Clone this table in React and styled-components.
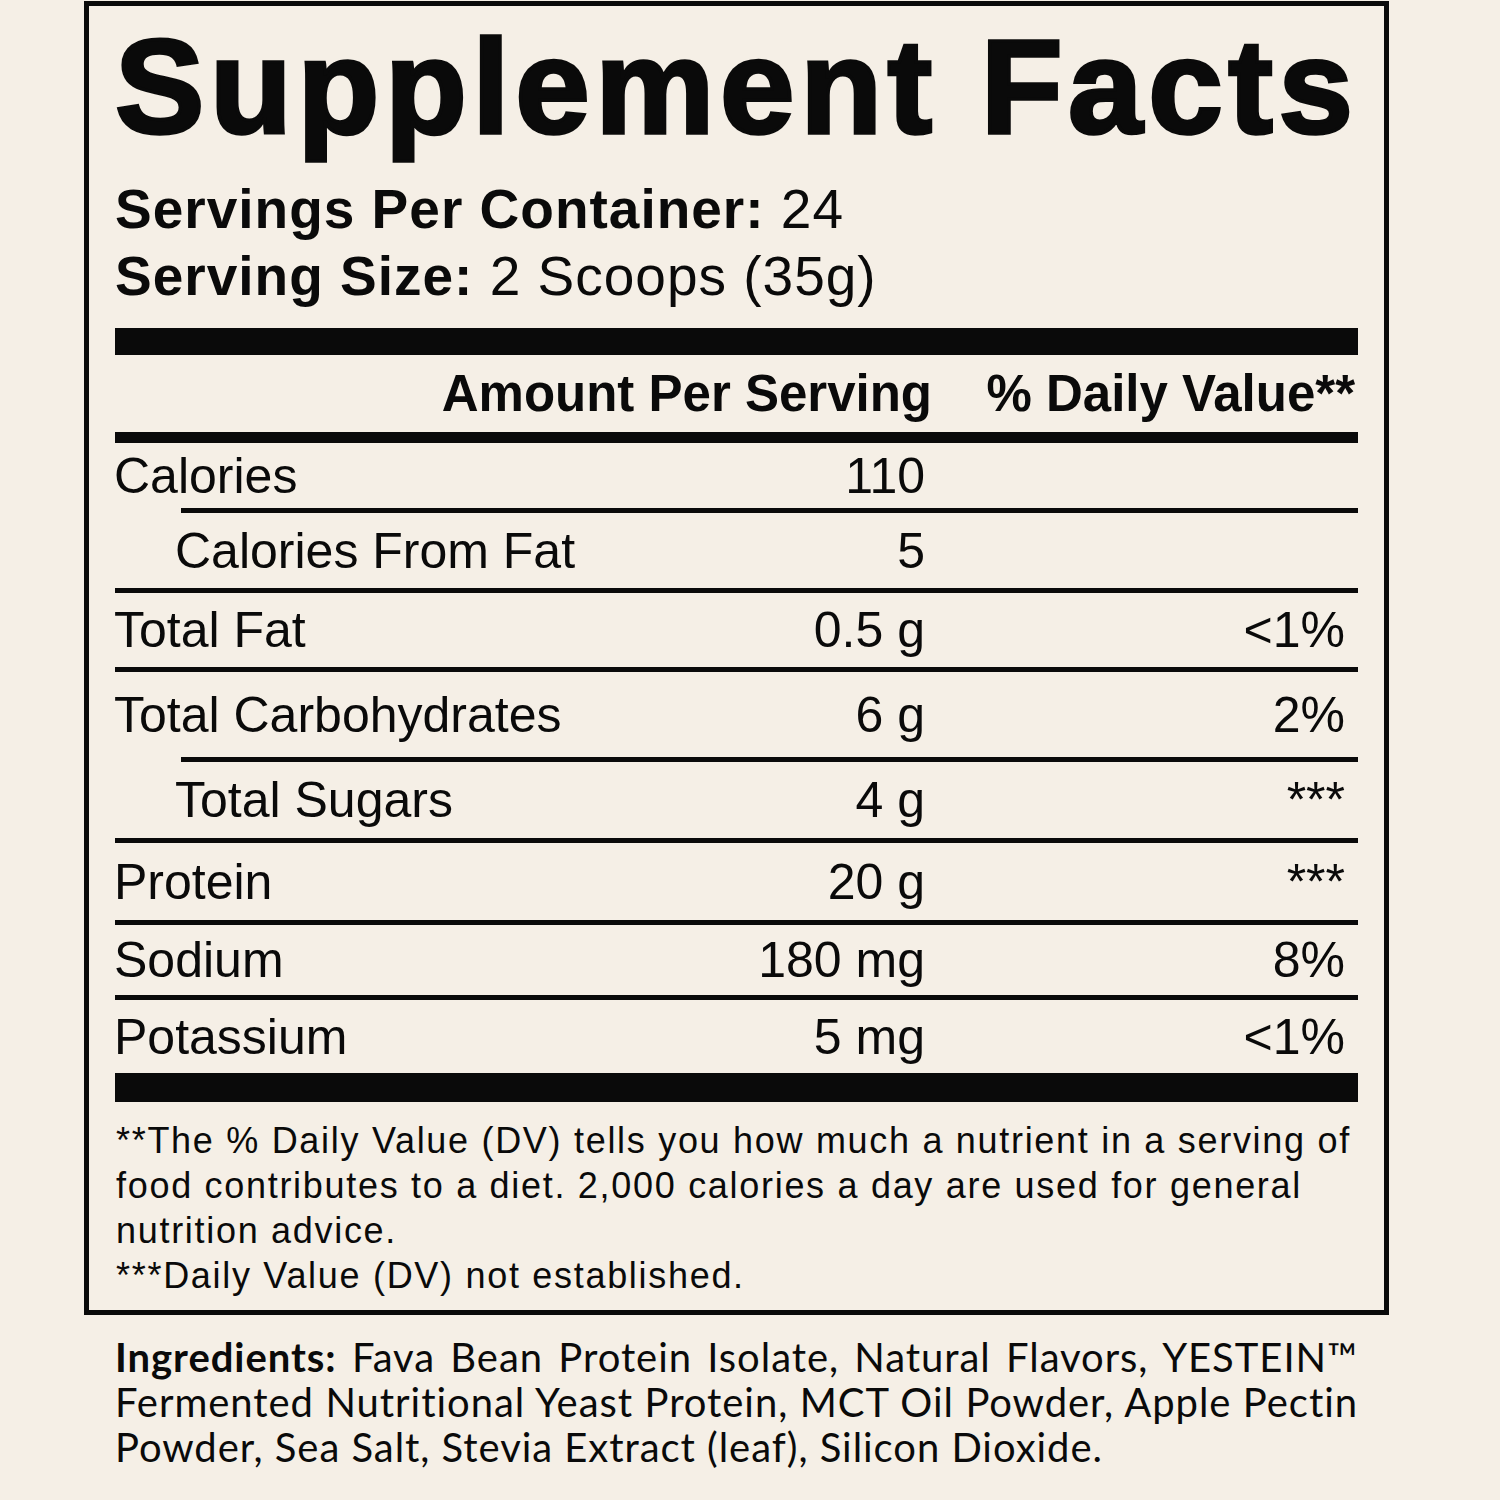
import React from 'react';
import styled, { createGlobalStyle } from 'styled-components';

const GlobalStyle = createGlobalStyle`
  html, body {
    margin: 0;
    padding: 0;
    background: #f5efe6;
  }
  body {
    font-family: "Liberation Sans", Arial, sans-serif;
    color: #0a0a0a;
  }
`;

const Page = styled.div`
  width: 1500px;
  min-height: 1500px;
  box-sizing: border-box;
  padding: 1px 0 0 84px;
`;

const Panel = styled.div`
  width: 1305px;
  box-sizing: border-box;
  border: 5px solid #0a0a0a;
  padding: 14px 26px 12px;
`;

const Title = styled.h1`
  margin: 0 0 22px;
  font-size: 134px;
  line-height: 1;
  font-weight: 700;
  letter-spacing: 5.6px;
  -webkit-text-stroke: 3.5px #0a0a0a;
  white-space: nowrap;
`;

const ServingLine = styled.div`
  font-size: 55px;
  line-height: 67px;
  letter-spacing: 1px;
  white-space: nowrap;

  strong {
    font-weight: 700;
  }
`;

const Bar = styled.div`
  height: ${p => p.$size}px;
  background: #0a0a0a;
  margin-top: ${p => p.$gap || 0}px;
`;

const HeaderRow = styled.div`
  display: grid;
  grid-template-columns: 1fr 300px 433px;
  align-items: center;
  height: 77px;
  font-size: 51px;
  line-height: 1;
  font-weight: 700;
  white-space: nowrap;
`;

const AmountHead = styled.div`
  grid-column: 1 / 3;
  text-align: right;
  margin-right: -7px;
`;

const DailyHead = styled.div`
  text-align: right;
  padding-right: 3px;
`;

const Row = styled.div`
  display: grid;
  grid-template-columns: 1fr 300px 433px;
  align-items: center;
  height: ${p => p.$h}px;
  font-size: 50px;
  line-height: 1;
  white-space: nowrap;
`;

const Name = styled.div`
  padding-left: ${p => (p.$sub ? 61 : 0)}px;
  margin-left: -1px;
`;

const Amount = styled.div`
  text-align: right;
`;

const Daily = styled.div`
  text-align: right;
  padding-right: 13px;
`;

const Divider = styled.div`
  height: 5px;
  background: #0a0a0a;
  margin-left: ${p => (p.$inset ? 66 : 0)}px;
`;

const Footnote = styled.div`
  margin-top: 16px;
  margin-left: 1px;
  font-size: 36px;
  line-height: 45px;
  letter-spacing: 1.7px;
  white-space: nowrap;
`;

const Ingredients = styled.div`
  width: 1243px;
  margin: 20px 0 0 31px;
  font-family: Lato, "Open Sans", sans-serif;
  font-size: 40px;
  line-height: 45px;
  letter-spacing: 0.95px;
`;

const IngredientLine = styled.div`
  text-align: justify;
  text-align-last: ${p => (p.$last ? 'left' : 'justify')};
  white-space: nowrap;

  strong {
    font-weight: 700;
  }
`;

const nutrients = [
  { name: 'Calories', amount: '110', dv: '', h: 65 },
  { name: 'Calories From Fat', amount: '5', dv: '', h: 75, sub: true },
  { name: 'Total Fat', amount: '0.5 g', dv: '<1%', h: 74 },
  { name: 'Total Carbohydrates', amount: '6 g', dv: '2%', h: 85 },
  { name: 'Total Sugars', amount: '4 g', dv: '***', h: 76, sub: true },
  { name: 'Protein', amount: '20 g', dv: '***', h: 77 },
  { name: 'Sodium', amount: '180 mg', dv: '8%', h: 70 },
  { name: 'Potassium', amount: '5 mg', dv: '<1%', h: 73 },
];

export default function App() {
  return (
    <Page>
      <GlobalStyle />
      <Panel>
        <Title>Supplement Facts</Title>
        <ServingLine>
          <strong>Servings Per Container:</strong> 24
        </ServingLine>
        <ServingLine>
          <strong>Serving Size:</strong> 2 Scoops (35g)
        </ServingLine>

        <Bar $size={27} $gap={18} />
        <HeaderRow>
          <AmountHead>Amount Per Serving</AmountHead>
          <DailyHead>% Daily Value**</DailyHead>
        </HeaderRow>
        <Bar $size={11} />

        {nutrients.map((n, i) => (
          <React.Fragment key={n.name}>
            {i > 0 && <Divider $inset={n.sub} />}
            <Row $h={n.h}>
              <Name $sub={n.sub}>{n.name}</Name>
              <Amount>{n.amount}</Amount>
              <Daily>{n.dv}</Daily>
            </Row>
          </React.Fragment>
        ))}

        <Bar $size={29} />
        <Footnote>
          **The % Daily Value (DV) tells you how much a nutrient in a serving of
          <br />
          food contributes to a diet. 2,000 calories a day are used for general
          <br />
          nutrition advice.
          <br />
          ***Daily Value (DV) not established.
        </Footnote>
      </Panel>

      <Ingredients>
        <IngredientLine>
          <strong>Ingredients:</strong> Fava Bean Protein Isolate, Natural Flavors, YESTEIN™
        </IngredientLine>
        <IngredientLine>
          Fermented Nutritional Yeast Protein, MCT Oil Powder, Apple Pectin
        </IngredientLine>
        <IngredientLine $last>
          Powder, Sea Salt, Stevia Extract (leaf), Silicon Dioxide.
        </IngredientLine>
      </Ingredients>
    </Page>
  );
}
